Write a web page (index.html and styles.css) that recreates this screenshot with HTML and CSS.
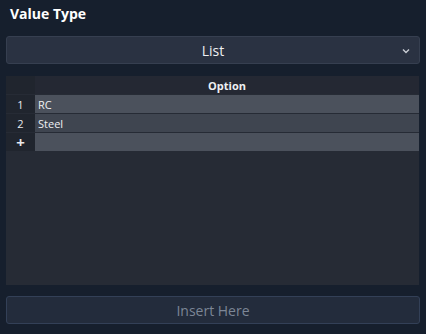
FILE: index.html
```html
<!DOCTYPE html>
<html>
<head>
<meta charset="utf-8">
<link rel="stylesheet" href="styles.css">
</head>
<body>
<div class="panel">
  <div class="title">Value Type</div>
  <div class="select">
    <span class="select-label">List</span>
    <svg class="chevron" width="8" height="6" viewBox="0 0 8 6"><path d="M1 1.5 L4 4.5 L7 1.5" fill="none" stroke="#c8ccd3" stroke-width="1.4"/></svg>
  </div>
  <div class="table">
    <div class="row head">
      <div class="idx"></div>
      <div class="cell hcell">Option</div>
    </div>
    <div class="row">
      <div class="idx">1</div>
      <div class="cell light">RC</div>
    </div>
    <div class="row">
      <div class="idx">2</div>
      <div class="cell dark">Steel</div>
    </div>
    <div class="row">
      <div class="idx plus">+</div>
      <div class="cell light"></div>
    </div>
  </div>
  <div class="insert">Insert Here</div>
</div>
</body>
</html>
```
FILE: styles.css
```css
html, body {
  margin: 0;
  padding: 0;
  background: #161f2d;
  width: 426px;
  height: 334px;
  overflow: hidden;
  font-family: "Open Sans", "Noto Sans", sans-serif;
}
.panel {
  display: flex;
  flex-direction: column;
  padding: 4px 6px 0 6px;
}
.title {
  color: #ffffff;
  font-weight: 700;
  font-size: 14px;
  line-height: 20px;
  padding-left: 4px;
  height: 20px;
}
.select {
  margin-top: 12px;
  height: 26px;
  border: 1px solid #363f50;
  border-radius: 3px;
  background: #2a3242;
  display: flex;
  align-items: center;
  justify-content: center;
  position: relative;
}
.select-label {
  color: #eef0f3;
  font-size: 14px;
}
.chevron {
  position: absolute;
  right: 9px;
  top: 11px;
}
.table {
  margin-top: 12px;
  height: 209px;
  width: 413px;
  background: #262b35;
  display: flex;
  flex-direction: column;
  gap: 1px;
}
.row {
  display: flex;
  height: 18px;
}
.idx {
  width: 29px;
  background: #20252e;
  color: #e8eaee;
  font-size: 11px;
  display: flex;
  align-items: center;
  justify-content: center;
}
.idx.plus {
  font-weight: 700;
  font-size: 15px;
}
.cell {
  flex: 1;
  display: flex;
  align-items: center;
  padding-left: 3px;
  color: #eef0f3;
  font-size: 11px;
}
.hcell {
  background: #242833;
  justify-content: center;
  font-weight: 700;
  padding-left: 0;
}
.light { background: #4b515c; }
.dark { background: #3f4550; }
.insert {
  margin-top: 11px;
  height: 26px;
  border: 1px solid #334057;
  border-radius: 3px;
  background: #232c3c;
  display: flex;
  align-items: center;
  justify-content: center;
  color: #7c8696;
  font-size: 14px;
}
```
